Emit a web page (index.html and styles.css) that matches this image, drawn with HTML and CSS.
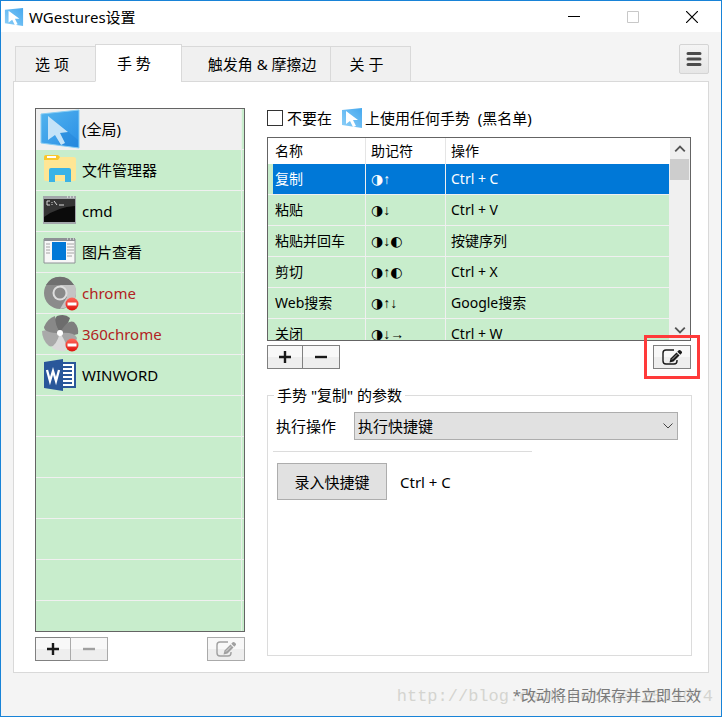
FILE: index.html
```
<!DOCTYPE html>
<html lang="zh-CN">
<head>
    <meta charset="UTF-8">
    <meta name="viewport" content="width=device-width, initial-scale=1.0">
    <title>WGestures设置</title>
    <link rel="stylesheet" href="styles.css">
</head>
<body>
    <svg class="defs" aria-hidden="true">
        <defs>
            <linearGradient id="blue" x1="0" y1="0" x2="1" y2="1">
                <stop offset="0" stop-color="#52b4ee"/>
                <stop offset="1" stop-color="#2a8fe6"/>
            </linearGradient>
            <linearGradient id="pale" x1="0" y1="1" x2="1" y2="0">
                <stop offset="0" stop-color="#8fd0f8"/>
                <stop offset="1" stop-color="#45a8ee"/>
            </linearGradient>
            <linearGradient id="red" x1="0" y1="0" x2="0" y2="1">
                <stop offset="0" stop-color="#ff6a5c"/>
                <stop offset="1" stop-color="#e0100c"/>
            </linearGradient>
        </defs>
        <symbol id="logo" viewBox="0 0 22 22">
            <path d="M1 3 21 1v20L1 18z" fill="url(#pale)"/>
            <path d="M5 4v13l4-3 3 6 3-1-3-6h5z" fill="#fff"/>
        </symbol>
        <symbol id="edit" viewBox="0 0 20 16">
            <path d="M12 1H4Q1 1 1 4v8q0 3 3 3h8q3 0 3-3v-1" fill="none" stroke="currentColor" stroke-width="1.4"/>
            <path d="M7.500 13.500 8.500 9.500 14.500 3.500 17.500 6.500 11.500 12.500z" fill="currentColor"/>
            <path d="M15.300 2.700 16.700 1.300q1-.8 2 .2l.8.8q1 1 .2 2l-1.400 1.400z" fill="currentColor"/>
            <path d="m10 10.500 5-5" stroke="#f4f4f4" stroke-width=".7"/>
        </symbol>
        <symbol id="blocked" viewBox="0 0 14 14">
            <circle cx="7" cy="7" r="6.500" fill="url(#red)"/>
            <path d="M2.500 5.500h9v3h-9z" fill="#fff"/>
        </symbol>
    </svg>

    <div class="window">
        <header class="titlebar">
            <svg class="title-icon"><use href="#logo"/></svg>
            <h1>WGestures设置</h1>
            <div class="window-buttons">
                <button type="button" aria-label="最小化"><svg viewBox="0 0 12 12"><path d="M0 5.500h12" stroke="#000"/></svg></button>
                <button type="button" aria-label="最大化" disabled><svg viewBox="0 0 12 12"><path d="M.5.5h11v11H.5z" fill="none" stroke="#c8c8c8"/></svg></button>
                <button type="button" aria-label="关闭"><svg viewBox="0 0 12 12"><path d="m0 0 12 12M12 0 0 12" stroke="#000" stroke-width="1.200"/></svg></button>
            </div>
        </header>

        <nav class="tabs">
            <button type="button" class="tab">选 项</button>
            <button type="button" class="tab active">手 势</button>
            <button type="button" class="tab wide">触发角 &amp; 摩擦边</button>
            <button type="button" class="tab">关 于</button>
            <button type="button" class="menu-button" aria-label="菜单">
                <svg viewBox="0 0 16 16"><path d="M2 2.500h12M2 8h12M2 13.500h12" stroke="#4c4c4c" stroke-width="3" stroke-linecap="round"/></svg>
            </button>
        </nav>

        <main class="panel">
            <section class="sidebar">
                <ul class="app-list">
                    <li class="selected">
                        <svg class="app-icon" viewBox="0 0 40 40">
                            <path d="M1 5 39 1v38L1 34z" fill="url(#blue)" stroke="#86cdf5"/>
                            <path d="m9 8 17 13 12 10v7L20 36z" fill="#1c7cd0" opacity=".35"/>
                            <path d="M8 7v24l7-5 6 10 4-2-5-10 8-1z" fill="#c4e3f8"/>
                        </svg>
                        (全局)
                    </li>
                    <li>
                        <svg class="app-icon" viewBox="0 0 40 40">
                            <path d="M4 8q0-3 2-3h12l2 2h13q3 0 3 2v20q0 2-2 2H6q-2 0-2-2z" fill="#ffe694"/>
                            <path d="M4 10V7q0-2 2-2h12l2 2-2 3z" fill="#f9c72d"/>
                            <path d="M7 6h9v2H7z" fill="#fff"/>
                            <path d="M9 32V20q0-2 2-2h18q2 0 2 2v12h-6v-7H15v7z" fill="#3ab3e6"/>
                        </svg>
                        文件管理器
                    </li>
                    <li>
                        <svg class="app-icon" viewBox="0 0 40 40">
                            <path d="M3 5h33v28H3z" fill="#a3a7ab"/>
                            <path d="M4 8h31v23H4z" fill="#0b0b0b"/>
                            <path d="M4 8h31v7Q18 16 4 26z" fill="#353535"/>
                            <path d="M10 10H7v4h3M12 11v1m0 1v1m2-4 3 4m2 0h5" fill="none" stroke="#d8d8d8"/>
                            <path d="M27 6h1m2 0h1m2 0h1" stroke="#fff"/>
                        </svg>
                        cmd
                    </li>
                    <li>
                        <svg class="app-icon" viewBox="0 0 40 40">
                            <path d="M4 7h31v24H4z" fill="#f7f7f7" stroke="#8e9296"/>
                            <path d="M4 6h31v3H4z" fill="#8e9296"/>
                            <path d="M12 10h14v18H12z" fill="#0078d7"/>
                            <path d="M6 12h4M6 15h4M6 18h4M6 21h4M27 12h7M27 15h7M27 18h7M27 21h7M27 24h5" stroke="#a4a4a4"/>
                            <path d="M27 7h1m2 0h1m2 0h1" stroke="#fff"/>
                        </svg>
                        图片查看
                    </li>
                    <li class="blocked">
                        <svg class="app-icon" viewBox="0 0 40 40">
                            <circle cx="20" cy="20" r="16" fill="#8b8b8b"/>
                            <path d="M6 12A16 16 0 0 1 34 12H20z" fill="#707070"/>
                            <path d="M20 12h15q4 14-7 22l-8 2 7-12z" fill="#c4c4c4"/>
                            <circle cx="20" cy="20" r="7.500" fill="#dedede"/>
                            <circle cx="20" cy="20" r="5.500" fill="#8a8a8a"/>
                            <use href="#blocked" x="25" y="24" width="14" height="14"/>
                        </svg>
                        chrome
                    </li>
                    <li class="blocked">
                        <svg class="app-icon" viewBox="0 0 40 40">
                            <path d="M20 19Q11 7 17 2q8-3 13 2-3 9-10 15z" fill="#6d6d6d"/>
                            <path d="M20 19Q27 5 34 8q5 5 4 12-9 3-18-1z" fill="#7e7e7e"/>
                            <path d="M20 19q15-1 17 5-2 9-8 12-7-6-9-17z" fill="#a6a6a6"/>
                            <path d="M20 19q9 13 5 18-7 1-13-3 0-8 8-15z" fill="#dadada"/>
                            <path d="M20 19Q15 35 9 32 2 26 2 17q9-3 18 2z" fill="#a9a9a9"/>
                            <path d="M20 19Q4 19 4 13 7 5 15 2q0 9 5 17z" fill="#888"/>
                            <circle cx="20" cy="19" r="3" fill="#fff"/>
                            <use href="#blocked" x="25" y="24" width="14" height="14"/>
                        </svg>
                        360chrome
                    </li>
                    <li>
                        <svg class="app-icon" viewBox="0 0 40 40">
                            <path d="M21 8h14v24H21z" fill="#fff" stroke="#2a579a" stroke-width="2"/>
                            <path d="M22 12h10M22 16h10M22 20h10M22 24h10M22 28h10" stroke="#2a579a" stroke-width="2"/>
                            <path d="M4 7 23 4v32L4 33z" fill="#2a579a"/>
                            <path d="m7 15 3 11 3-10 3 10 3-11" fill="none" stroke="#fff" stroke-width="2.300"/>
                        </svg>
                        WINWORD
                    </li>
                </ul>
                <div class="toolbar">
                    <button type="button" class="tool add" aria-label="添加程序"><svg viewBox="0 0 12 12"><path d="M6 0v12M0 6h12" stroke="currentColor" stroke-width="2.400"/></svg></button>
                    <button type="button" class="tool remove" aria-label="移除程序" disabled><svg viewBox="0 0 12 12"><path d="M0 6h12" stroke="currentColor" stroke-width="2.400"/></svg></button>
                    <button type="button" class="tool edit" aria-label="编辑程序" disabled><svg class="edit-icon"><use href="#edit"/></svg></button>
                </div>
            </section>

            <section class="content">
                <label class="blacklist">
                    <input type="checkbox">
                    <span>不要在</span>
                    <svg class="label-icon"><use href="#logo"/></svg>
                    <span>上使用任何手势&nbsp; (黑名单)</span>
                </label>

                <div class="gesture-list">
                    <table>
                        <colgroup>
                            <col class="col-name">
                            <col class="col-sign">
                            <col>
                        </colgroup>
                        <thead>
                            <tr><th>名称</th><th>助记符</th><th>操作</th></tr>
                        </thead>
                        <tbody>
                            <tr class="current"><td>复制</td><td class="sign"><b>◑</b>↑</td><td>Ctrl + C</td></tr>
                            <tr><td>粘贴</td><td class="sign"><b>◑</b>↓</td><td>Ctrl + V</td></tr>
                            <tr><td>粘贴并回车</td><td class="sign"><b>◑</b>↓<b>◐</b></td><td>按键序列</td></tr>
                            <tr><td>剪切</td><td class="sign"><b>◑</b>↑<b>◐</b></td><td>Ctrl + X</td></tr>
                            <tr><td>Web搜索</td><td class="sign"><b>◑</b>↑↓</td><td>Google搜索</td></tr>
                            <tr><td>关闭</td><td class="sign"><b>◑</b>↓→</td><td>Ctrl + W</td></tr>
                        </tbody>
                    </table>
                    <div class="scrollbar">
                        <button type="button" aria-label="向上滚动"><svg viewBox="0 0 10 8"><path d="m1 6 4-4 4 4" fill="none" stroke="#555" stroke-width="1.500"/></svg></button>
                        <div class="thumb"></div>
                        <button type="button" aria-label="向下滚动"><svg viewBox="0 0 10 8"><path d="m1 2 4 4 4-4" fill="none" stroke="#555" stroke-width="1.500"/></svg></button>
                    </div>
                </div>
                <div class="toolbar gesture-tools">
                    <button type="button" class="tool add" aria-label="添加手势"><svg viewBox="0 0 12 12"><path d="M6 0v12M0 6h12" stroke="currentColor" stroke-width="2.400"/></svg></button>
                    <button type="button" class="tool remove" aria-label="移除手势"><svg viewBox="0 0 12 12"><path d="M0 6h12" stroke="currentColor" stroke-width="2.400"/></svg></button>
                    <button type="button" class="tool edit marked" aria-label="编辑手势"><svg class="edit-icon"><use href="#edit"/></svg></button>
                </div>

                <fieldset>
                    <legend>手势 "复制" 的参数</legend>
                    <div class="action-row">
                        <label for="action">执行操作</label>
                        <div class="select-box">
                            <select id="action">
                                <option>执行快捷键</option>
                            </select>
                            <svg class="arrow" viewBox="0 0 10 6"><path d="m.5.500 4.500 4.500L9.500.500" fill="none" stroke="#444"/></svg>
                        </div>
                    </div>
                    <hr>
                    <div class="hotkey-row">
                        <button type="button" class="record">录入快捷键</button>
                        <span>Ctrl + C</span>
                    </div>
                </fieldset>
            </section>
        </main>

        <footer class="status">
            <span class="watermark">http://blog.csdn.net/u012518074</span>
            <span class="hint">*改动将自动保存并立即生效</span>
        </footer>
    </div>
</body>
</html>
```

FILE: styles.css
```
* {
    box-sizing: border-box;
}
body {
    margin: 0;
    font-family: "Noto Sans", "Noto Sans CJK SC", sans-serif;
    font-size: 15px;
    line-height: 20px;
    color: #000;
}
button, select, input {
    font: inherit;
    color: inherit;
    margin: 0;
    padding: 0;
}
svg {
    display: block;
    flex: none;
}
.defs {
    position: absolute;
    width: 0;
    height: 0;
}
.window {
    display: flex;
    flex-direction: column;
    min-height: 100vh;
    border: 1px solid #1883d7;
    background-color: #f4f4f4;
}

/* title bar */
.titlebar {
    display: flex;
    align-items: center;
    height: 31px;
    padding-left: 3px;
    background-color: #fff;
}
.title-icon {
    width: 20px;
    height: 20px;
}
h1 {
    margin: 0 0 0 5px;
    font-size: 15px;
    font-weight: normal;
}
.window-buttons {
    display: flex;
    margin-left: auto;
}
.window-buttons button {
    display: flex;
    align-items: center;
    justify-content: center;
    width: 59px;
    height: 30px;
    border: none;
    background: none;
}
.window-buttons svg {
    width: 12px;
    height: 12px;
}

/* tabs */
.tabs {
    display: flex;
    align-items: flex-end;
    height: 50px;
    margin: 0 12px -1px;
    padding-left: 2px;
    z-index: 1;
}
.tab {
    height: 36px;
    padding: 0 26px 0 19px;
    border: 1px solid #d9d9d9;
    margin-right: -1px;
    background-color: #f0f0f0;
    white-space: nowrap;
}
.tab.active {
    height: 38px;
    padding: 0 30px 0 21px;
    border-bottom-color: #fff;
    background-color: #fff;
}
.tab.wide {
    padding: 0 13px 0 26px;
}
.menu-button {
    display: flex;
    align-items: center;
    justify-content: center;
    align-self: flex-start;
    width: 30px;
    height: 30px;
    margin: 12px 0 0 auto;
    border: 1px solid #d4d4d4;
    border-radius: 2px;
    background: linear-gradient(#f4f4f4, #e6e6e6);
}
.menu-button svg {
    width: 16px;
    height: 16px;
}

.panel {
    display: flex;
    gap: 22px;
    flex: 1;
    margin: 0 12px;
    padding: 26px 16px 11px 21px;
    border: 1px solid #d9d9d9;
    background-color: #fff;
}

/* program list */
.sidebar {
    display: flex;
    flex-direction: column;
    width: 210px;
}
.app-list {
    flex: 1;
    margin: 0;
    padding: 0;
    list-style: none;
    border: 1px solid #646464;
    background-color: #c8edcc;
    background-image:
        linear-gradient(to left, transparent 2px, #e8f0e8 2px, #e8f0e8 3px, transparent 3px),
        repeating-linear-gradient(transparent 0, transparent 40px, #f0f0f0 40px, #f0f0f0 41px);
}
.app-list li {
    display: flex;
    align-items: center;
    gap: 2px;
    height: 41px;
    margin-right: 3px;
    padding-left: 4px;
    border-bottom: 1px solid #f0f0f0;
}
.app-list .selected {
    background-color: #f0f0f0;
}
.app-list .blocked {
    color: #b22222;
}
.app-icon {
    width: 40px;
    height: 40px;
}

/* add / remove / edit buttons */
.toolbar {
    display: flex;
    margin-top: 5px;
}
.tool {
    display: flex;
    align-items: center;
    justify-content: center;
    width: 38px;
    height: 24px;
    border: 1px solid #808080;
    background: linear-gradient(#f8f8f8 50%, #eee 50%);
    color: #1a1a1a;
}
.tool:disabled {
    border-color: #aaa;
    color: #a0a0a0;
}
.tool.add {
    width: 36px;
    margin-right: -1px;
}
.tool.edit {
    margin-left: auto;
}
.tool svg {
    width: 12px;
    height: 12px;
}
.tool .edit-icon {
    width: 20px;
    height: 16px;
}
.marked {
    position: relative;
}
.marked::after {
    content: "";
    position: absolute;
    inset: -11px -10px;
    border: 3px solid #ff3a3a;
}

/* gestures */
.content {
    display: flex;
    flex-direction: column;
    flex: 1;
    min-width: 0;
}
.blacklist {
    display: flex;
    align-items: center;
    height: 20px;
    margin-bottom: 9px;
}
.blacklist input {
    appearance: none;
    width: 16px;
    height: 16px;
    margin-right: 4px;
    border: 1px solid #333;
    background-color: #fff;
}
.label-icon {
    width: 22px;
    height: 22px;
    margin: 0 2px 0 9px;
}
.gesture-list {
    display: flex;
    height: 204px;
    margin-right: 1px;
    border: 1px solid #646464;
    overflow: hidden;
    font-size: 14px;
}
table {
    flex: 1;
    align-self: flex-start;
    table-layout: fixed;
    border-collapse: separate;
    border-spacing: 0;
}
.col-name {
    width: 98px;
}
.col-sign {
    width: 80px;
}
th, td {
    padding: 0 0 0 5px;
    border-right: 1px solid #f0f0f0;
    text-align: left;
    font-weight: normal;
    white-space: nowrap;
}
th {
    height: 26px;
    border-color: #e5e5e5;
}
th:last-child {
    border-color: #fff;
}
td {
    height: 31px;
    border-bottom: 1px solid #f0f0f0;
    background-color: #c8edcc;
}
th:first-child, td:first-child {
    padding-left: 7px;
}
.current td {
    background-color: #0078d7;
    color: #fff;
}
.current td:first-child {
    background: linear-gradient(to right, #c8edcc 5px, #0078d7 5px);
}
.sign {
    font-family: "Liberation Sans", sans-serif;
}
.sign b {
    font-family: "DejaVu Sans", sans-serif;
    font-weight: normal;
}
.scrollbar {
    display: flex;
    flex-direction: column;
    width: 20px;
    padding-right: 1px;
    background-color: #f0f0f0;
}
.scrollbar button {
    display: flex;
    align-items: center;
    justify-content: center;
    height: 21px;
    border: none;
    background: none;
}
.scrollbar button:last-child {
    margin-top: auto;
}
.scrollbar svg {
    width: 12px;
    height: 10px;
}
.thumb {
    height: 21px;
    background-color: #cdcdcd;
}
.gesture-tools {
    margin: 4px 1px 16px 0;
}

/* parameters of the selected gesture */
fieldset {
    flex: 1;
    min-width: 0;
    margin: 0 0 5px;
    padding: 7px 13px 0 5px;
    border: 1px solid #dcdcdc;
}
legend {
    margin-left: 1px;
    padding: 0 3px;
}
.action-row {
    display: flex;
    align-items: center;
    gap: 18px;
    padding-left: 3px;
}
.select-box {
    position: relative;
    flex: 1;
}
select {
    appearance: none;
    display: block;
    width: 100%;
    height: 28px;
    padding-left: 3px;
    border: 1px solid #adadad;
    border-radius: 0;
    background-color: #e1e1e1;
}
.arrow {
    position: absolute;
    right: 5px;
    top: 11px;
    width: 10px;
    height: 6px;
    pointer-events: none;
}
hr {
    width: 64%;
    margin: 11px 0;
    border: none;
    border-top: 1px solid #dcdcdc;
}
.hotkey-row {
    display: flex;
    align-items: center;
    gap: 13px;
    padding-left: 4px;
}
.record {
    width: 110px;
    height: 37px;
    border: 1px solid #adadad;
    background-color: #e1e1e1;
}

/* status line */
.status {
    position: relative;
    display: flex;
    align-items: center;
    justify-content: flex-end;
    height: 43px;
    padding-right: 20px;
    color: #7a7a7a;
}
.watermark {
    position: absolute;
    right: 8px;
    bottom: 9px;
    font-family: "Liberation Mono", monospace;
    font-size: 17px;
    color: #d4d4d0;
}
.hint {
    position: relative;
}
```
